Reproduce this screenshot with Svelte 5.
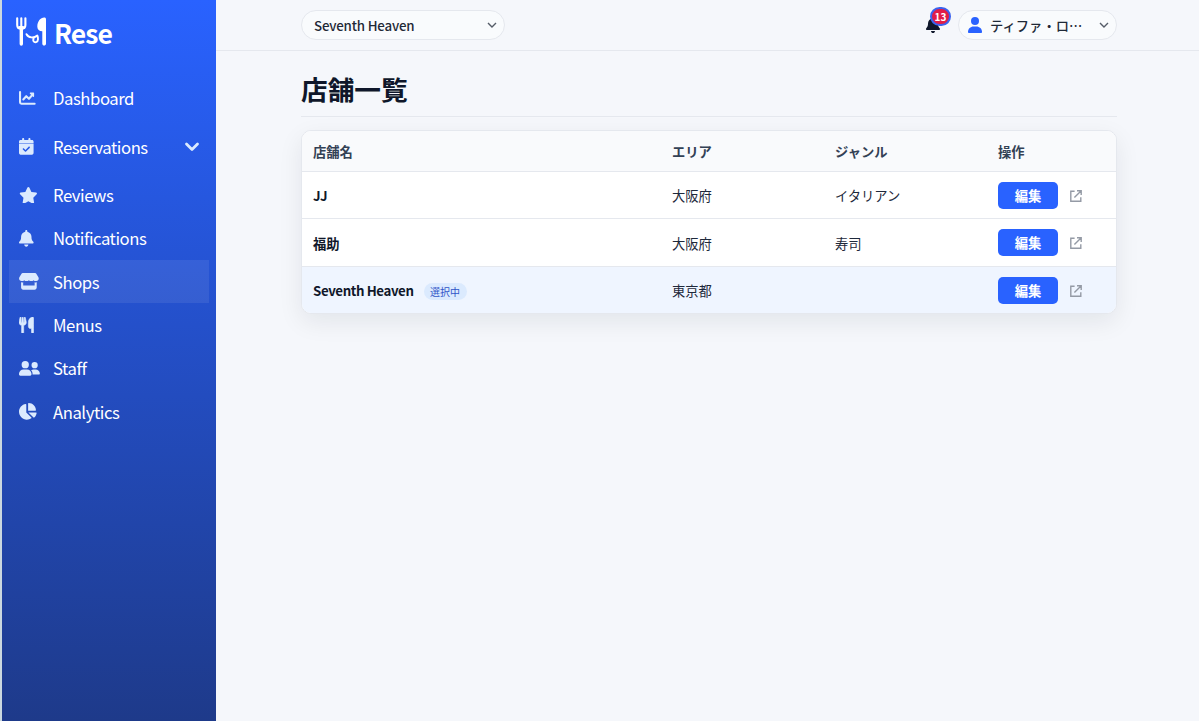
<script>
  const nav = [
    { id: 'chart', label: 'Dashboard' },
    { id: 'calendar', label: 'Reservations', expandable: true },
    { id: 'star', label: 'Reviews' },
    { id: 'bell', label: 'Notifications' },
    { id: 'store', label: 'Shops', active: true },
    { id: 'utensils', label: 'Menus' },
    { id: 'users', label: 'Staff' },
    { id: 'pie', label: 'Analytics' }
  ];
  const shops = [
    { name: 'JJ', area: '大阪府', genre: 'イタリアン' },
    { name: '福助', area: '大阪府', genre: '寿司' },
    { name: 'Seventh Heaven', area: '東京都', genre: '', selected: true }
  ];
  const bell = 'M224 0c-17.7 0-32 14.3-32 32V51.2C119 66 64 130.6 64 208v18.8c0 47-17.3 92.4-48.5 127.6l-7.4 8.3c-8.4 9.4-10.4 22.9-5.3 34.4S19.4 416 32 416H416c12.6 0 24-7.4 29.2-18.9s3.1-25-5.3-34.4l-7.4-8.3C401.3 319.2 384 273.9 384 226.8V208c0-77.4-55-142-128-156.8V32c0-17.7-14.3-32-32-32zm45.3 493.3c12-12 18.7-28.3 18.7-45.3H160c0 17 6.7 33.3 18.7 45.3s28.3 18.7 45.3 18.7s33.3-6.7 45.3-18.7z';
  const icons = {
    calendar: { w: 448, d: 'M128 0c17.7 0 32 14.3 32 32V64H288V32c0-17.7 14.3-32 32-32s32 14.3 32 32V64h48c26.500 0 48 21.500 48 48v48H0V112C0 85.500 21.500 64 48 64H96V32c0-17.700 14.300-32 32-32zM0 176H448V464c0 26.500-21.500 48-48 48H48c-26.500 0-48-21.500-48-48V176zM329 305c9.400-9.400 9.400-24.600 0-33.900s-24.600-9.400-33.900 0l-95 95-47-47c-9.400-9.400-24.600-9.400-33.900 0s-9.400 24.600 0 33.900l64 64c9.400 9.400 24.600 9.400 33.900 0L329 305z' },
    star: { w: 576, d: 'M316.9 18C311.6 7 300.4 0 288.1 0s-23.4 7-28.8 18L195 150.3 51.4 171.5c-12 1.8-22 10.2-25.7 21.7s-.7 24.2 7.9 32.7L137.8 329 113.2 474.7c-2 12 3 24.2 12.9 31.3s23 8 33.8 2.3l128.3-68.5 128.3 68.5c10.8 5.7 23.9 4.9 33.8-2.3s14.9-19.3 12.9-31.3L438.5 329 542.7 225.9c8.6-8.5 11.7-21.2 7.9-32.7s-13.7-19.9-25.7-21.7L381.2 150.3 316.9 18z' },
    bell: { w: 448, d: bell },
    store: { w: 608, d: 'M112 0H496C509 0 519 7 526 18L592 126C626 181 594 240 530 248C493 252 466 238 449 220C430 240 407 248 377 248C347 248 322 240 304 220C286 240 261 248 231 248C201 248 178 240 159 220C142 238 115 252 78 248C14 240-18 181 16 126L82 18C89 7 99 0 112 0zM64 286C90 292 107 289 128 281V384H480V281C501 289 518 292 544 286V448C544 483 515 512 480 512H128C93 512 64 483 64 448z' },
    utensils: { w: 448, d: 'M416 0C400 0 288 32 288 176V288c0 35.3 28.7 64 64 64h32V480c0 17.7 14.3 32 32 32s32-14.3 32-32V352 240 32c0-17.7-14.3-32-32-32zM64 16C64 7.8 57.9 1 49.7 .1S34.2 4.6 32.4 12.5L2.1 148.8C.7 155.1 0 161.5 0 167.9c0 45.9 35.1 83.6 80 87.7V480c0 17.7 14.3 32 32 32s32-14.3 32-32V255.6c44.9-4.1 80-41.8 80-87.7c0-6.4-.7-12.8-2.1-19.1L191.6 12.5c-1.8-8-9.3-13.3-17.4-12.4S160 7.8 160 16V150.2c0 5.4-4.4 9.8-9.8 9.8c-5.1 0-9.3-3.9-9.8-9L127.9 14.6C127.2 6.3 120.3 0 112 0s-15.2 6.3-15.9 14.6L83.7 151c-.5 5.1-4.7 9-9.8 9c-5.4 0-9.8-4.4-9.8-9.8V16z' },
    users: { w: 640, d: 'M192 32a112 112 0 1 1 0 224a112 112 0 1 1 0-224zM480 64a96 96 0 1 1 0 192a96 96 0 1 1 0-192zM0 422C0 346 61 288 137 288H247C323 288 384 346 384 422V440C384 462 366 480 344 480H40C18 480 0 462 0 440zM371 313C394 297 421 288 450 288H510C582 288 640 346 640 418C640 435 627 448 610 448H416V422C416 380 399 341 371 313z' },
    pie: { w: 544, d: 'M280 240V16.600c0-9 7-16.600 16-16.600C419.700 0 520 100.300 520 224c0 9-7.600 16-16.600 16H280zM0 272C0 150.700 90 50.300 207 34.300c9.200-1.300 17 6.100 17 15.400V288L380.500 444.500c6.700 6.700 6.200 17.700-1.500 23.100C339.800 495.600 291.800 512 240 512C107.500 512 0 404.600 0 272zm526.400 16c9.300 0 16.600 7.800 15.400 17c-7.700 55.900-34.600 105.600-73.900 142.300c-6 5.600-15.400 5.200-21.200-.7L288 288H526.400z' }
  };
</script>

<div class="app">
  <aside class="sidebar">
    <div class="brand">
      <svg class="logo" viewBox="0 0 32 30" fill="none" stroke="#fff" stroke-linecap="round" stroke-linejoin="round">
        <path d="M2.200 1.200V8C2.200 10.800 4 11.800 6.300 11.800S10.400 10.800 10.400 8V1.200M6.300 1.200V11" stroke-width="2.100" />
        <path d="M4.500 10.500H8.100" stroke-width="3" />
        <path d="M6.300 11V27" stroke-width="3.400" />
        <path d="M22.300 9.500C22.300 4.500 25.500.6 29.200.6C30.400.6 31 1.200 31 2.400V26.800C31 29.200 27.300 29.200 27.300 26.800V14.300C24.200 14.300 22.300 12.600 22.300 9.500z" fill="#fff" stroke="none" />
        <path d="M11.500 17.200C13.500 21 18.700 21.500 22.300 18.500C23.200 20.500 23.600 24.600 21.200 25.100C18.800 25.600 17.400 23.500 18.700 21.500" stroke-width="1.900" />
      </svg>
      <span>Rese</span>
    </div>
    <nav>
      {#each nav as item}
        <a class="item" class:active={item.active} class:group={item.expandable}>
          <span class="icon">
            {#if item.id === 'chart'}
              <svg viewBox="0 0 512 512" fill="none" stroke="currentColor" stroke-linecap="round" stroke-linejoin="round">
                <path d="M32 64V376C32 406 46 420 76 420H480" stroke-width="64" />
                <path d="M132 290L222 190L306 270L410 150" stroke-width="64" />
                <path d="M350 100H444V194z" fill="currentColor" stroke-width="40" />
              </svg>
            {:else}
              <svg viewBox="0 0 {icons[item.id].w} 512" style:width="{icons[item.id].w / 30.7}px"><path fill="currentColor" stroke="currentColor" stroke-width={item.id === 'utensils' ? 18 : 0} d={icons[item.id].d} /></svg>
            {/if}
          </span>
          <span>{item.label}</span>
          {#if item.expandable}
            <svg class="expand" viewBox="0 0 16 10" fill="none" stroke="currentColor" stroke-width="2.800" stroke-linecap="round" stroke-linejoin="round"><path d="M2.500 2L8 7.500L13.500 2" /></svg>
          {/if}
        </a>
      {/each}
    </nav>
  </aside>

  <div class="page">
    <header>
      <button class="pill shop">
        <span>Seventh Heaven</span>
        <svg class="chev" viewBox="0 0 10 6"><path d="M1 1L5 5L9 1" /></svg>
      </button>
      <div class="account">
        <div class="alerts">
          <svg viewBox="0 0 448 512"><path d={bell} fill="#0f172a" /></svg>
          <span class="count">13</span>
        </div>
        <button class="pill user">
          <svg class="person" viewBox="0 0 14 16"><circle cx="7" cy="4" r="4" /><path d="M0 14.900C0 11.700 2.500 9.400 5.600 9.400H8.400C11.500 9.400 14 11.700 14 14.900C14 15.500 13.500 16 12.900 16H1.100C.5 16 0 15.500 0 14.900z" /></svg>
          <span>ティファ・ロ…</span>
          <svg class="chev" viewBox="0 0 10 6"><path d="M1 1L5 5L9 1" /></svg>
        </button>
      </div>
    </header>

    <main>
      <h1>店舗一覧</h1>
      <div class="card">
        <div class="row head">
          <span>店舗名</span><span>エリア</span><span>ジャンル</span><span>操作</span>
        </div>
        {#each shops as shop}
          <div class="row" class:selected={shop.selected}>
            <div class="name"><span class:long={shop.name.length > 2}>{shop.name}</span>{#if shop.selected}<span class="tag">選択中</span>{/if}</div>
            <div class="cell">{shop.area}</div>
            <div class="cell">{shop.genre}</div>
            <div class="actions">
              <button class="edit">編集</button>
              <svg viewBox="0 0 12 12" fill="none" stroke="#949aa5" stroke-width="1.400"><path d="M4.600 1.200H.8V11.200H10.800V7.200M7 .8H11.200V5M11 1L4.400 7.600" /></svg>
            </div>
          </div>
        {/each}
      </div>
    </main>
  </div>
</div>

<style>
  :global(body) { margin: 0; }
  .app {
    display: flex;
    box-sizing: border-box;
    height: 721px;
    overflow: hidden;
    border-left: 2px solid #cbd8df;
    background: #f5f7fb;
    color: #1e293b;
    font: 13.300px/20px "Noto Sans CJK JP", sans-serif;
  }
  .sidebar {
    flex: none;
    box-sizing: border-box;
    width: 214px;
    padding: 16px 7px 0;
    background: linear-gradient(180deg, #2962ff 0%, #1e3a8a 100%);
    color: #fff;
  }
  .brand {
    display: flex;
    align-items: center;
    height: 34px;
    padding-left: 6px;
    gap: 7px;
    font-size: 26.500px;
    font-weight: 700;
    letter-spacing: -0.900px;
  }
  .logo { width: 32px; height: 30px; margin-top: -3px; }
  nav { display: flex; flex-direction: column; margin-top: 26.800px; }
  .item {
    display: flex;
    align-items: center;
    height: 43.300px;
    padding: 0 9px 0 10px;
    font-size: 16.700px;
    line-height: 24px;
    letter-spacing: -0.450px;
  }
  .group { margin: 5px 0; }
  .active { background: rgba(255, 255, 255, 0.080); }
  .icon { width: 34px; color: #dbeafe; display: flex; }
  .icon svg { width: 16.700px; height: 16.700px; }
  .expand { width: 16px; height: 10px; margin-left: auto; color: #dbeafe; }
  .page { flex: 1; min-width: 0; }
  header {
    display: flex;
    justify-content: space-between;
    align-items: center;
    box-sizing: border-box;
    height: 51px;
    padding: 0 82px 0 85px;
    border-bottom: 1px solid #e5e8ee;
  }
  .pill {
    display: flex;
    align-items: center;
    box-sizing: border-box;
    height: 30px;
    border: 1px solid #e5e8ee;
    border-radius: 15px;
    background: #f9fbfd;
    color: #1f2937;
    font: 500 13.300px/20px "Noto Sans CJK JP", sans-serif;
    white-space: nowrap;
  }
  .pill span { padding-top: 2px; }
  .shop { width: 204px; padding: 0 7px 0 12px; justify-content: space-between; letter-spacing: -0.180px; }
  .chev { width: 10px; height: 6px; fill: none; stroke: #555c68; stroke-width: 1.400; }
  .account { display: flex; align-items: center; gap: 17px; }
  .alerts { position: relative; width: 16px; height: 16px; }
  .alerts svg { display: block; width: 16px; height: 16px; }
  .count {
    position: absolute;
    left: 5px;
    top: -10px;
    box-sizing: border-box;
    width: 21px;
    height: 19px;
    border: 2px solid #3b62ee;
    border-radius: 10px;
    background: #e11d48;
    color: #fff;
    font-size: 10px;
    font-weight: 700;
    line-height: 15px;
    text-align: center;
  }
  .user { width: 159px; padding: 0 7px 0 9px; }
  .user span { margin-left: 8px; }
  .user .chev { margin-left: auto; }
  .person { width: 14px; height: 16px; fill: #2962ff; }
  main { padding: 19px 82px 0 85px; }
  h1 {
    box-sizing: border-box;
    height: 47px;
    margin: 0 0 13px;
    border-bottom: 1px solid #e5e8ee;
    color: #0f172a;
    font-size: 26.700px;
    font-weight: 700;
    line-height: 37px;
  }
  .card {
    border: 1px solid #e5e8ee;
    border-radius: 10px;
    overflow: hidden;
    background: #fff;
    box-shadow: 0 8px 25px rgba(15, 23, 42, 0.080);
  }
  .row {
    display: grid;
    grid-template-columns: 359px 163px 163px 1fr;
    align-items: center;
    box-sizing: border-box;
    height: 47.500px;
    padding-left: 11px;
    border-bottom: 1px solid #e5e8ee;
  }
  .row:nth-child(2) { height: 47px; }
  .row:nth-child(3) { height: 48px; }
  .row:last-child { border-bottom: 0; height: 46px; }
  .head { height: 41px; background: #f9fafc; color: #334155; font-weight: 700; }
  .head span { padding-top: 1px; }
  .cell { padding-top: 2px; }
  .name { display: flex; align-items: center; padding-top: 2px; color: #0f172a; font-weight: 600; }
  .long { letter-spacing: -0.400px; }
  .selected { background: #eff5ff; }
  .tag {
    margin-left: 10px;
    padding: 0 6.500px;
    border-radius: 9px;
    background: #dbeafe;
    color: #3156c8;
    font-size: 10px;
    font-weight: 400;
    line-height: 17px;
  }
  .actions { display: flex; align-items: center; gap: 12px; }
  .actions svg { width: 12px; height: 12px; margin-top: 1px; }
  .edit {
    width: 60px;
    height: 27px;
    padding: 1px 0 0;
    border: 0;
    border-radius: 5px;
    background: #2962ff;
    color: #fff;
    font: 700 13.300px/20px "Noto Sans CJK JP", sans-serif;
  }
</style>
